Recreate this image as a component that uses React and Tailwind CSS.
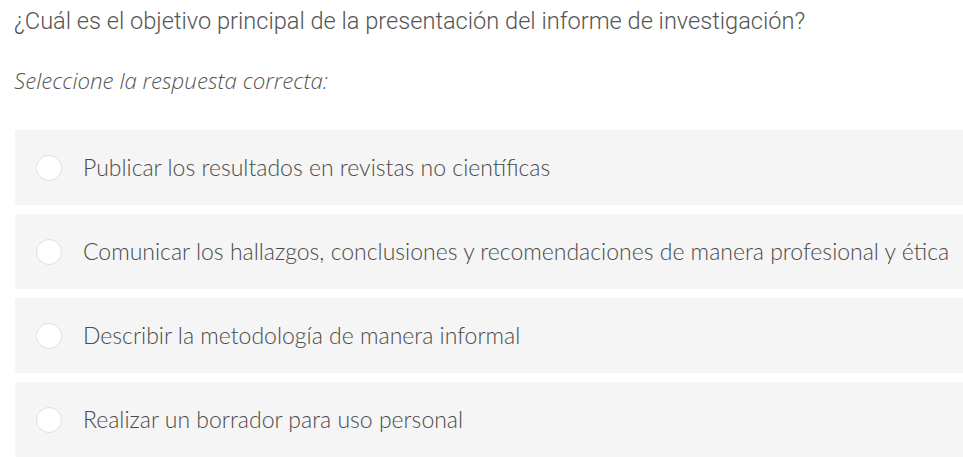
export default function App() {
  const options = [
    "Publicar los resultados en revistas no científicas",
    "Comunicar los hallazgos, conclusiones y recomendaciones de manera profesional y ética",
    "Describir la metodología de manera informal",
    "Realizar un borrador para uso personal",
  ];
  return (
    <div className="w-[963px] h-[457px] overflow-hidden bg-white">
      <div className="pl-[14px] pt-[6px] h-[36px] leading-[30px] text-[23.6px] font-light text-[#555] font-['Roboto',sans-serif] whitespace-nowrap">
        ¿Cuál es el objetivo principal de la presentación del informe de investigación?
      </div>
      <div className="pl-[14px] mt-[30px] h-[30px] leading-[30px] text-[22.3px] italic font-light text-[#555] font-['Open_Sans',sans-serif] whitespace-nowrap">
        Seleccione la respuesta correcta:
      </div>
      <div className="mt-[34px] ml-[15px] flex flex-col gap-[9px]">
        {options.map((o) => (
          <div key={o} className="h-[75px] bg-[#f5f5f5] rounded-l-[3px] flex items-center pl-[21px]">
            <div className="w-[26px] h-[26px] rounded-full bg-white border border-[#e0e0e0] shrink-0" />
            <div className="ml-[21px] text-[23px] font-light text-[#4a4a4a] font-['Lato',sans-serif] whitespace-nowrap">{o}</div>
          </div>
        ))}
      </div>
    </div>
  );
}
